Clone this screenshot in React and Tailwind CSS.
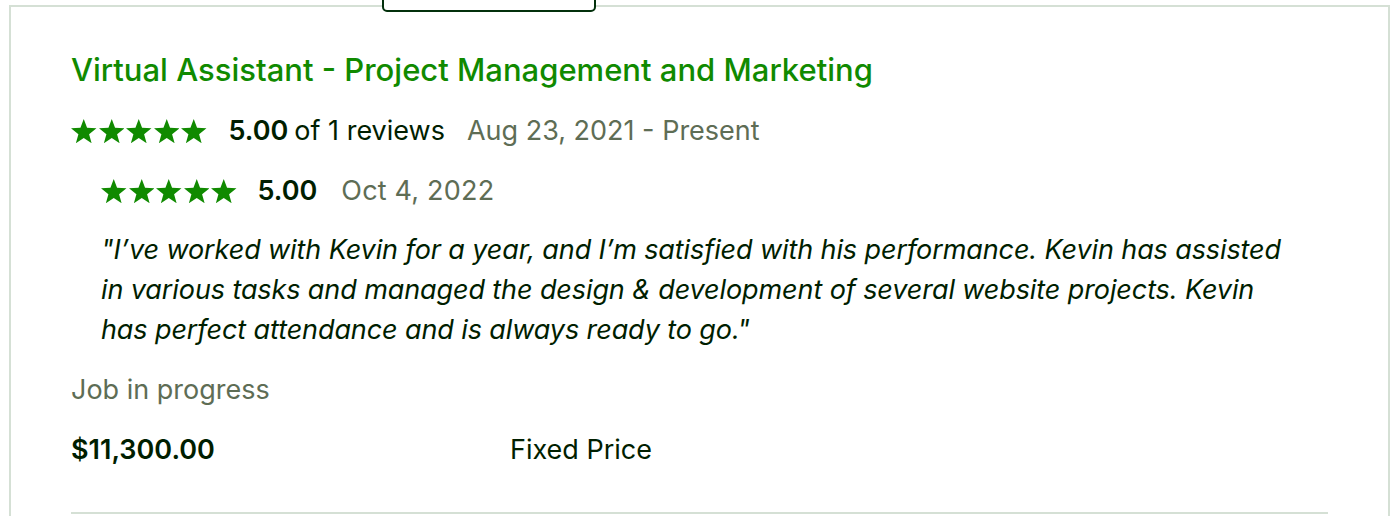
import React from "react";

const Star = () => (
  <svg width="25.5" height="24.3" viewBox="0 0 24 22.9" className="block shrink-0">
    <path
      d="M12 0 L15.12 8.33 L24 8.72 L17.04 14.26 L19.42 22.83 L12 17.92 L4.58 22.83 L6.96 14.26 L0 8.72 L8.88 8.33 Z"
      fill="#108a00"
    />
  </svg>
);

const Stars = () => (
  <div className="flex items-center gap-[2px]">
    <Star />
    <Star />
    <Star />
    <Star />
    <Star />
  </div>
);

export default function App() {
  return (
    <div
      className="w-[1392px] h-[516px] overflow-hidden bg-white"
      style={{ fontFamily: 'Inter, "Liberation Sans", Arial, sans-serif' }}
    >
      <div className="relative ml-[9px] mr-[2px] mt-[5px] h-[620px] border-2 border-b-0 border-[#d5e0d5]">
        <div className="absolute left-[371px] top-[-20px] h-[25px] w-[214px] rounded-b-[5px] border-2 border-[#03300c] bg-white" />
        <div className="px-[60px] pt-[45px] text-[#001e00]">
          <h2 className="text-[31px] leading-[36px] font-medium text-[#108a00]">
            Virtual Assistant - Project Management and Marketing
          </h2>
          <div className="mt-[25px] flex h-[36px] items-center text-[27px] leading-[36px]">
            <Stars />
            <span className="ml-[22px] font-semibold">5.00</span>
            <span className="ml-[6px]">of 1 reviews</span>
            <span className="ml-[22px] text-[#5e6d55]">Aug 23, 2021 - Present</span>
          </div>
          <div className="ml-[30px] mt-[24px] flex h-[36px] items-center text-[27px] leading-[36px]">
            <Stars />
            <span className="ml-[21px] font-semibold">5.00</span>
            <span className="ml-[24px] text-[#5e6d55] tracking-[0.2px]">Oct 4, 2022</span>
          </div>
          <p className="ml-[30px] mt-[21px] w-[1230px] whitespace-nowrap text-[27px] leading-[40px] italic tracking-[-0.1px]">
            "I’ve worked with Kevin for a year, and I’m satisfied with his performance. Kevin has assisted
            <br />
            in various tasks and managed the design &amp; development of several website projects. Kevin
            <br />
            has perfect attendance and is always ready to go."
          </p>
          <div className="mt-[22px] text-[27px] leading-[36px] text-[#5e6d55]">Job in progress</div>
          <div className="mt-[24px] flex text-[27px] leading-[36px]">
            <span className="w-[439px] font-semibold">$11,300.00</span>
            <span>Fixed Price</span>
          </div>
          <div className="mt-[44px] h-[2px] bg-[#d5e0d5]" />
        </div>
      </div>
    </div>
  );
}
